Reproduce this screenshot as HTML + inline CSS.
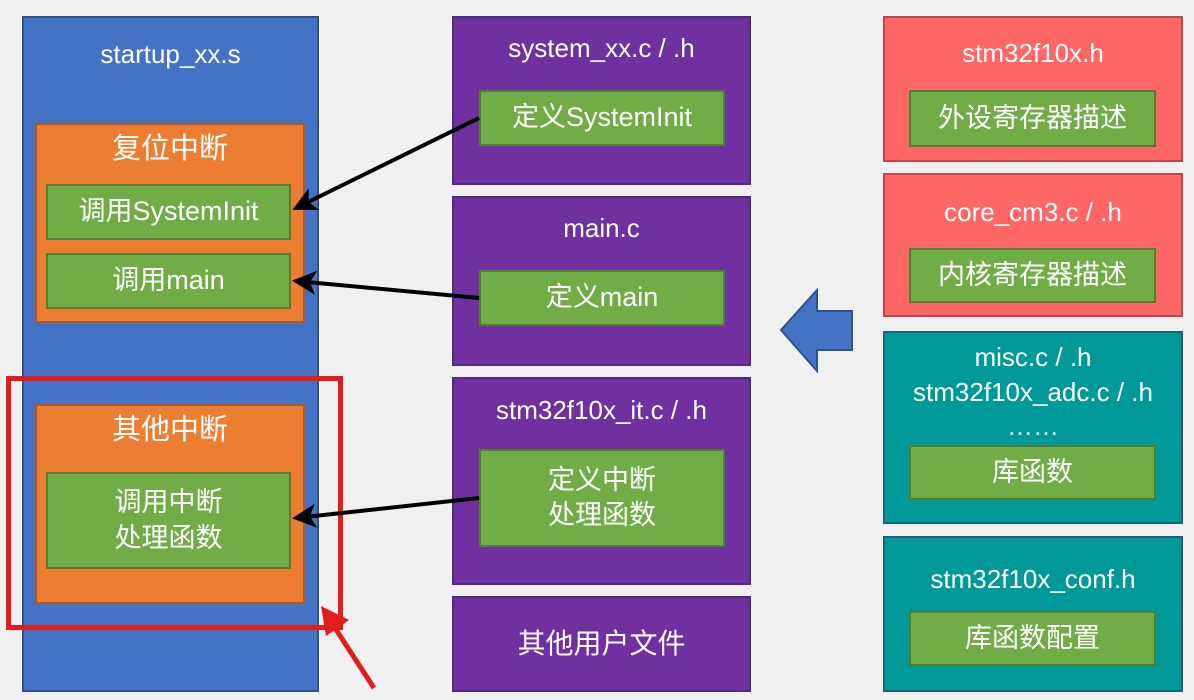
<!DOCTYPE html><html><head><meta charset="utf-8"><style>
body{margin:0;width:1194px;height:700px;background:#f0f0f0;position:relative;overflow:hidden;font-family:"Liberation Sans","Noto Sans CJK SC",sans-serif;color:#fff}
.b{position:absolute;box-sizing:border-box;display:flex;justify-content:center;text-align:center;line-height:1.3}
.blue{background:#4472c4;border:2px solid #2f528f}
.or{background:#ed7d31;border:2px solid #ae5a21}
.gr{background:#70ad47;border:2px solid #507e32;align-items:center;font-size:27px}
.pu{background:#7030a0;border:2px solid #4c2a87}
.rd{background:#ff6666;border:2px solid #c04848}
.te{background:#009999;border:2px solid #1f5f80}
.t{font-size:26px}
</style></head><body>
<div class="b blue t" style="left:22px;top:16px;width:297px;height:676px;padding-top:20px">startup_xx.s</div>
<div class="b or t" style="left:35px;top:123px;width:270px;height:200px;padding-top:6px;font-size:29px">复位中断</div>
<div class="b gr" style="left:46px;top:184px;width:245px;height:56px">调用SystemInit</div>
<div class="b gr" style="left:46px;top:253px;width:245px;height:56px">调用main</div>
<div class="b or t" style="left:35px;top:404px;width:270px;height:200px;padding-top:6px;font-size:29px">其他中断</div>
<div class="b gr" style="left:46px;top:472px;width:245px;height:97px">调用中断<br>处理函数</div>
<div style="position:absolute;left:6px;top:376px;width:327px;height:244px;border:5px solid #e31c1c"></div>

<div class="b pu t" style="left:452px;top:16px;width:299px;height:169px;padding-top:14px">system_xx.c / .h</div>
<div class="b gr" style="left:479px;top:90px;width:246px;height:56px">定义SystemInit</div>
<div class="b pu t" style="left:452px;top:196px;width:299px;height:170px;padding-top:14px">main.c</div>
<div class="b gr" style="left:479px;top:270px;width:246px;height:56px">定义main</div>
<div class="b pu t" style="left:452px;top:377px;width:299px;height:208px;padding-top:15px">stm32f10x_it.c / .h</div>
<div class="b gr" style="left:479px;top:449px;width:246px;height:98px">定义中断<br>处理函数</div>
<div class="b pu" style="left:452px;top:596px;width:299px;height:96px;align-items:center;font-size:28px">其他用户文件</div>

<div class="b rd t" style="left:883px;top:16px;width:300px;height:146px;padding-top:19px">stm32f10x.h</div>
<div class="b gr" style="left:909px;top:90px;width:247px;height:57px">外设寄存器描述</div>
<div class="b rd t" style="left:883px;top:173px;width:300px;height:144px;padding-top:21px">core_cm3.c / .h</div>
<div class="b gr" style="left:909px;top:248px;width:247px;height:55px">内核寄存器描述</div>
<div class="b te t" style="left:883px;top:331px;width:300px;height:193px;padding-top:7px;line-height:1.33">misc.c / .h<br>stm32f10x_adc.c / .h<br>……</div>
<div class="b gr" style="left:909px;top:445px;width:247px;height:55px">库函数</div>
<div class="b te t" style="left:883px;top:536px;width:300px;height:156px;padding-top:25px">stm32f10x_conf.h</div>
<div class="b gr" style="left:909px;top:611px;width:247px;height:55px">库函数配置</div>

<svg style="position:absolute;left:0;top:0" width="1194" height="700">
<defs><marker id="a" markerWidth="6" markerHeight="6" refX="5" refY="3" orient="auto" markerUnits="strokeWidth"><path d="M0,0L6,3L0,6L1.5,3z" fill="#000"/></marker></defs>
<g stroke="#000" stroke-width="4" marker-end="url(#a)">
<line x1="479" y1="118" x2="296" y2="208"/>
<line x1="479" y1="298" x2="296" y2="281"/>
<line x1="479" y1="498" x2="296" y2="518"/>
</g>
<polygon points="781,330 817,290 817,311 852,311 852,350 817,350 817,371" fill="#4472c4" stroke="#2f528f" stroke-width="2"/>
<line x1="374" y1="688" x2="335" y2="628" stroke="#e31c1c" stroke-width="5"/>
<polygon points="321,606 349,620 326,636" fill="#e31c1c"/>
</svg>
</body></html>
